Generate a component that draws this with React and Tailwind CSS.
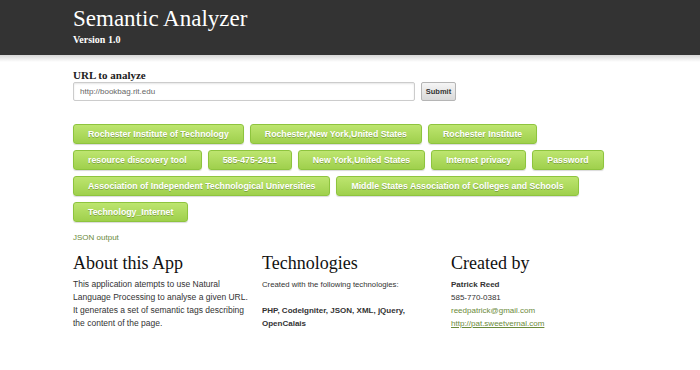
import React from 'react';

const serif = { fontFamily: '"Liberation Serif", "Times New Roman", serif' };
const sans = { fontFamily: '"Liberation Sans", Arial, sans-serif' };

const tags = [
  'Rochester Institute of Technology',
  'Rochester,New York,United States',
  'Rochester Institute',
  'resource discovery tool',
  '585-475-2411',
  'New York,United States',
  'Internet privacy',
  'Password',
  'Association of Independent Technological Universities',
  'Middle States Association of Colleges and Schools',
  'Technology_Internet',
];

const Tag = ({ label }) => (
  <button
    className="h-[20px] px-[14px] rounded-[3px] border border-[#8ec43e] bg-gradient-to-b from-[#bde56f] to-[#9fd04c] text-white text-[8.75px] font-bold leading-none shadow-[0_1px_1px_rgba(0,0,0,0.15)] [text-shadow:0_1px_0_rgba(0,0,0,0.25)]"
    style={sans}
  >
    {label}
  </button>
);

export default function App() {
  return (
    <div className="min-h-screen bg-white" style={sans}>
      {/* Header */}
      <div className="h-[55px] bg-[#333333]">
        <div className="w-[554px] mx-auto pt-[6px]">
          <h1 className="text-[23px] leading-[26px] text-white" style={serif}>Semantic Analyzer</h1>
          <p className="text-[10px] leading-[12px] font-bold text-white mt-[2px]" style={serif}>Version 1.0</p>
        </div>
      </div>
      <div className="h-[7px] bg-gradient-to-b from-[#d6d6d6] to-white" />

      <div className="w-[554px] mx-auto">
        {/* URL form */}
        <label className="block mt-[6px] text-[11px] leading-[14px] font-bold text-[#222]" style={serif}>URL to analyze</label>
        <div className="flex items-center gap-[6px]">
          <div className="w-[342px] h-[19px] border border-[#cccccc] rounded-[2px] shadow-[inset_0_1px_2px_rgba(0,0,0,0.1)] flex items-center px-[6px] text-[8px] text-[#666]">
            http://bookbag.rit.edu
          </div>
          <button className="w-[35px] h-[19px] rounded-[2px] border border-[#b5b5b5] bg-gradient-to-b from-[#f5f5f5] to-[#d9d9d9] text-[7.5px] font-bold text-[#333]">
            Submit
          </button>
        </div>

        {/* Tags */}
        <div className="flex flex-wrap gap-x-[6px] gap-y-[6px] mt-[23px]">
          {tags.map((t) => (
            <Tag key={t} label={t} />
          ))}
        </div>

        <a className="block mt-[11px] text-[8px] leading-[10px] text-[#6b8a3a]">JSON output</a>

        {/* Info columns */}
        <div className="grid grid-cols-[189px_189px_1fr] mt-[9px]">
          <div>
            <h2 className="text-[18px] leading-[22px] text-[#111]" style={serif}>About this App</h2>
            <p className="mt-[4px] text-[8.5px] leading-[13px] text-[#333] w-[176px]">
              This application atempts to use Natural Language Processing to analyse a given URL. It generates a set of semantic tags describing the content of the page.
            </p>
          </div>
          <div>
            <h2 className="text-[18px] leading-[22px] text-[#111]" style={serif}>Technologies</h2>
            <p className="mt-[4px] text-[7.75px] leading-[13px] text-[#333]">Created with the following technologies:</p>
            <p className="mt-[13px] text-[8px] leading-[13px] font-bold text-[#333] w-[160px]">
              PHP, CodeIgniter, JSON, XML, jQuery, OpenCalais
            </p>
          </div>
          <div>
            <h2 className="text-[18px] leading-[22px] text-[#111]" style={serif}>Created by</h2>
            <div className="mt-[4px] text-[8px] leading-[13px] text-[#333]">
              <p className="font-bold">Patrick Reed</p>
              <p>585-770-0381</p>
              <p className="text-[#6b8a3a]">reedpatrick@gmail.com</p>
              <a className="underline text-[#6b8a3a]">http://pat.sweetvernal.com</a>
            </div>
          </div>
        </div>
      </div>
    </div>
  );
}
